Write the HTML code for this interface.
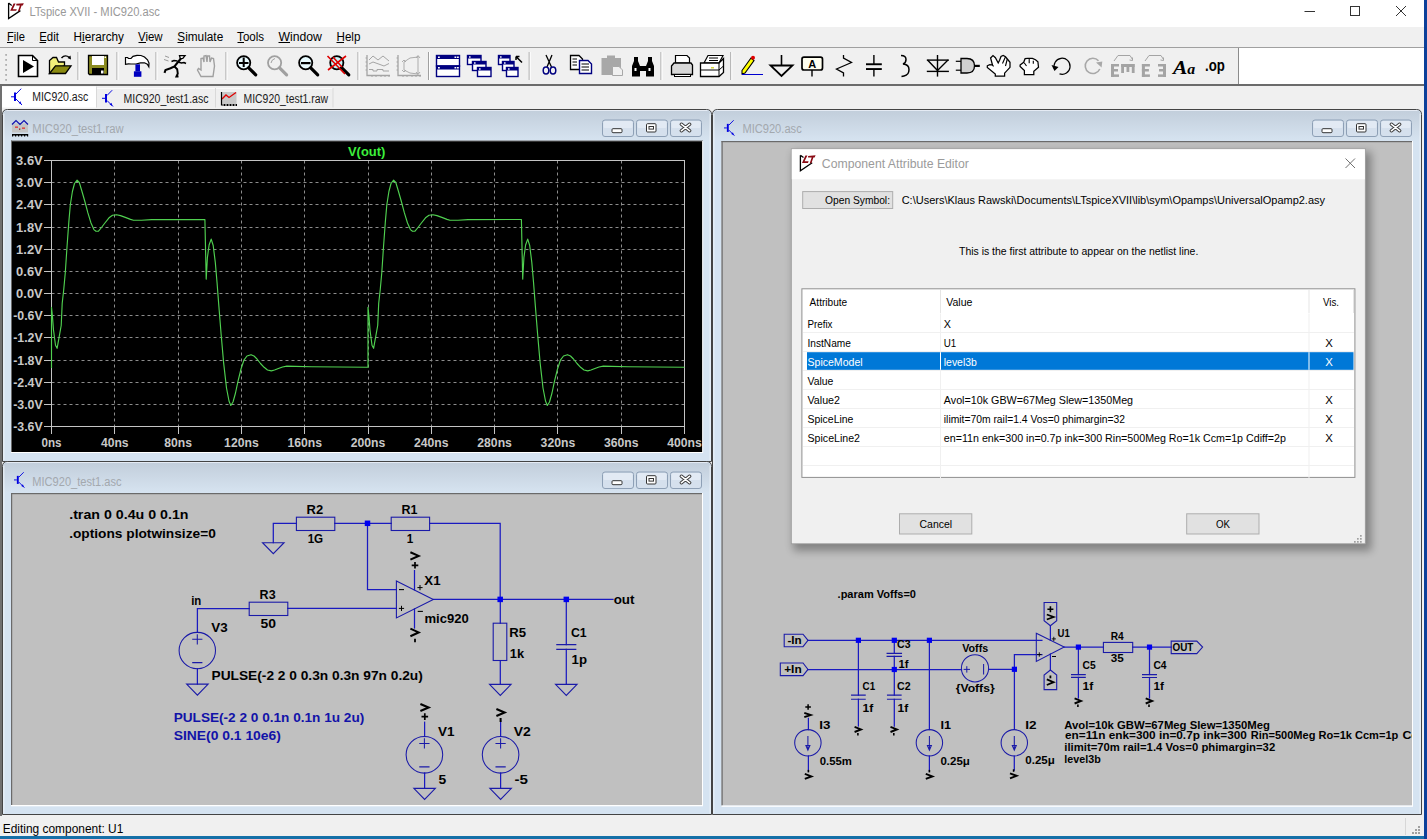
<!DOCTYPE html>
<html><head><meta charset="utf-8"><style>
*{margin:0;padding:0}
html,body{width:1427px;height:839px;overflow:hidden;background:#f0f0f0}
svg{display:block;font-family:"Liberation Sans",sans-serif}
</style></head><body>
<svg width="1427" height="839" viewBox="0 0 1427 839">
<rect x="0" y="0" width="1427" height="839" fill="#f0f0f0"/>
<rect x="0" y="0" width="1427" height="27" fill="#ffffff"/>
<g transform="translate(0.0,0.0)">
<path d="M8.6,3.1 L8.6,18.6 L20.4,10.6 M8.6,3.1 L11.7,5.4" stroke="#000" fill="none" stroke-width="1.3"/>
<path d="M13.6,3.4 L15.6,3.4 L12.8,9.2 L16.8,9.2 L16.2,10.8 L10.2,10.8 Z" stroke="none" fill="#8a0a14" stroke-width="1"/>
<path d="M16.3,3.8 L23.8,3.2 L22.8,5.5 L21.6,5.5 L19.6,11.2 L17.9,11.2 L19.9,5.5 L16.3,5.5 Z" stroke="none" fill="#8a0a14" stroke-width="1"/>
</g>
<text x="29.4" y="16" font-size="12" fill="#999" textLength="130.4" lengthAdjust="spacingAndGlyphs">LTspice XVII - MIC920.asc</text>
<line x1="1304.5" y1="11.5" x2="1315" y2="11.5" stroke="#333" stroke-width="1"/>
<rect x="1350.5" y="6.5" width="9" height="9" fill="none" stroke="#333" stroke-width="1"/>
<line x1="1396" y1="6" x2="1406" y2="16" stroke="#333" stroke-width="1"/>
<line x1="1406" y1="6" x2="1396" y2="16" stroke="#333" stroke-width="1"/>
<rect x="0" y="27" width="1424" height="20" fill="#f0f0f0"/>
<rect x="0" y="47" width="1424" height="1" fill="#a0a0a0"/>
<text x="7" y="41" font-size="12" fill="#000" textLength="18" lengthAdjust="spacingAndGlyphs">File</text>
<text x="39.2" y="41" font-size="12" fill="#000" textLength="19.7" lengthAdjust="spacingAndGlyphs">Edit</text>
<text x="73.6" y="41" font-size="12" fill="#000" textLength="50.4" lengthAdjust="spacingAndGlyphs">Hierarchy</text>
<text x="138" y="41" font-size="12" fill="#000" textLength="24.6" lengthAdjust="spacingAndGlyphs">View</text>
<text x="177.3" y="41" font-size="12" fill="#000" textLength="45.9" lengthAdjust="spacingAndGlyphs">Simulate</text>
<text x="237.1" y="41" font-size="12" fill="#000" textLength="27" lengthAdjust="spacingAndGlyphs">Tools</text>
<text x="278.4" y="41" font-size="12" fill="#000" textLength="43.5" lengthAdjust="spacingAndGlyphs">Window</text>
<text x="336.5" y="41" font-size="12" fill="#000" textLength="23.9" lengthAdjust="spacingAndGlyphs">Help</text>
<rect x="7" y="42" width="6" height="1" fill="#000"/>
<rect x="39.5" y="42" width="6.5" height="1" fill="#000"/>
<rect x="81.5" y="42" width="3.5" height="1" fill="#000"/>
<rect x="138.5" y="42" width="7.5" height="1" fill="#000"/>
<rect x="177.5" y="42" width="6.5" height="1" fill="#000"/>
<rect x="237.5" y="42" width="6.5" height="1" fill="#000"/>
<rect x="278.5" y="42" width="11.5" height="1" fill="#000"/>
<rect x="336.5" y="42" width="7.5" height="1" fill="#000"/>
<rect x="0" y="48" width="1238" height="36" fill="#f0f0f0"/>
<rect x="1238" y="48" width="189" height="36" fill="#ffffff"/>
<rect x="1238" y="48" width="1" height="36" fill="#8c8c8c"/>
<rect x="0" y="84" width="1424" height="2" fill="#6b6b6b"/>
<rect x="5.2" y="54" width="1.8" height="1.8" fill="#b0b0b0"/>
<rect x="5.2" y="59" width="1.8" height="1.8" fill="#b0b0b0"/>
<rect x="5.2" y="64" width="1.8" height="1.8" fill="#b0b0b0"/>
<rect x="5.2" y="69" width="1.8" height="1.8" fill="#b0b0b0"/>
<rect x="5.2" y="74" width="1.8" height="1.8" fill="#b0b0b0"/>
<rect x="5.2" y="79" width="1.8" height="1.8" fill="#b0b0b0"/>
<rect x="77.5" y="52" width="1" height="28" fill="#a0a0a0"/>
<rect x="78.5" y="52" width="1" height="28" fill="#ffffff"/>
<rect x="116.5" y="52" width="1" height="28" fill="#a0a0a0"/>
<rect x="117.5" y="52" width="1" height="28" fill="#ffffff"/>
<rect x="155.5" y="52" width="1" height="28" fill="#a0a0a0"/>
<rect x="156.5" y="52" width="1" height="28" fill="#ffffff"/>
<rect x="225.5" y="52" width="1" height="28" fill="#a0a0a0"/>
<rect x="226.5" y="52" width="1" height="28" fill="#ffffff"/>
<rect x="357.5" y="52" width="1" height="28" fill="#a0a0a0"/>
<rect x="358.5" y="52" width="1" height="28" fill="#ffffff"/>
<rect x="428" y="52" width="1" height="28" fill="#a0a0a0"/>
<rect x="429" y="52" width="1" height="28" fill="#ffffff"/>
<rect x="528.7" y="52" width="1" height="28" fill="#a0a0a0"/>
<rect x="529.7" y="52" width="1" height="28" fill="#ffffff"/>
<rect x="660.5" y="52" width="1" height="28" fill="#a0a0a0"/>
<rect x="661.5" y="52" width="1" height="28" fill="#ffffff"/>
<rect x="730.3" y="52" width="1" height="28" fill="#a0a0a0"/>
<rect x="731.3" y="52" width="1" height="28" fill="#ffffff"/>
<rect x="0" y="86" width="1424" height="23" fill="#f0f0f0"/>
<rect x="0" y="815" width="1424" height="1" fill="#ffffff"/>
<rect x="0" y="816" width="1424" height="20" fill="#f0f0f0"/>
<text x="2.8" y="833" font-size="12.6" fill="#000" textLength="120.5" lengthAdjust="spacingAndGlyphs">Editing component: U1</text>
<rect x="1405" y="818" width="1" height="17" fill="#d7d7d7"/>
<rect x="1418" y="826" width="2" height="2" fill="#a0a0a0"/>
<rect x="1415" y="829" width="2" height="2" fill="#a0a0a0"/>
<rect x="1418" y="829" width="2" height="2" fill="#a0a0a0"/>
<rect x="1412" y="832" width="2" height="2" fill="#a0a0a0"/>
<rect x="1415" y="832" width="2" height="2" fill="#a0a0a0"/>
<rect x="1418" y="832" width="2" height="2" fill="#a0a0a0"/>
<rect x="1424" y="0" width="3" height="839" fill="#0c409a"/>
<rect x="0" y="836" width="1424" height="3" fill="#1570a8"/>
<path d="M18.5,55.5 L32.5,55.5 L37.5,60.5 L37.5,76.5 L18.5,76.5 Z" stroke="#000" fill="#fff" stroke-width="1.6"/>
<path d="M32.5,55.5 L32.5,60.5 L37.5,60.5" stroke="#000" fill="none" stroke-width="1"/>
<path d="M23,60 L34,66.5 L23,73 Z" stroke="none" fill="#000" stroke-width="1"/>
<path d="M49.5,73.5 L49.5,60.5 L53,57.5 L56.5,57.5 L58.5,62 L64.5,62 L64.5,65.5 Z" stroke="#000" fill="#f2f07a" stroke-width="1.3"/>
<path d="M49.5,73.5 L55.5,65.8 L71,65.8 L65.5,73.5 Z" stroke="#000" fill="#8a8a10" stroke-width="1.3"/>
<path d="M61.5,58 Q65,54 69.5,57.5" stroke="#000" fill="none" stroke-width="1.4"/>
<path d="M67.5,58 L71,59.5 L70.5,55.5 Z" stroke="none" fill="#000" stroke-width="1"/>
<path d="M88.5,55.5 L107.5,55.5 L107.5,74.5 L89.5,74.5 L88.5,73.5 Z" stroke="#000" fill="#8c8c20" stroke-width="1.3"/>
<rect x="92" y="56" width="12" height="9" fill="#ffffff"/>
<rect x="92" y="68" width="12" height="7" fill="#000"/>
<rect x="101" y="70.5" width="2.5" height="3" fill="#ffffff"/>
<rect x="104.5" y="56.5" width="1.5" height="1.5" fill="#ffffff"/>
<path d="M125.5,57.5 L127.5,57.5 L128.5,58.5 L131,58.5 L133,56.3 L137,55.3 L141,55.5 L144.5,57 L147.5,59.8 L149,63 L148.8,66.8 L147.3,64.3 L144.5,62.8 L140.5,62.8 L136,64 L131,64 L128.5,63.8 L125.5,64.3 Z" stroke="#000" fill="#fff" stroke-width="1.2"/>
<rect x="135.4" y="64.3" width="4.6" height="7.2" fill="#0000c0"/>
<rect x="133.9" y="71.3" width="7.5" height="5.5" fill="#0000c0"/>
<path d="M179.5,55.6 L185,55.6 L182.8,58.3 L180.3,58.6 Z" stroke="#000" fill="#fff" stroke-width="1.3"/>
<path d="M181,58.5 L178,62 L174.5,66.5 L170.5,68.3 L165.5,70 L164.5,72.8" stroke="#000" fill="none" stroke-width="2.1"/>
<path d="M174.5,66.5 L177.2,69.3 L177.8,73.5 L176.4,76.5 L178.5,76.5" stroke="#000" fill="none" stroke-width="1.9"/>
<path d="M178,62 L181.5,63 L184,62.5 L186,63.5" stroke="#000" fill="none" stroke-width="1.6"/>
<path d="M177.5,61 L174,60.5 L171.5,61.5" stroke="#000" fill="none" stroke-width="1.6"/>
<path d="M165,56 L169,57.5 M164,59.5 L168.5,61" stroke="#909090" fill="none" stroke-width="0.9"/>
<path d="M201,76.5 L197.5,70 L198.5,68.5 L201,70 L201,58.5 L203,58 L204,62 L204,56 L206,55.5 L207,62 L207.5,56 L209.5,56 L210,62 L211.5,58 L213.5,58.5 L214.5,66 L213,76.5 Z" stroke="#a0a0a0" fill="#f0f0f0" stroke-width="1.4"/>
<circle cx="243.7" cy="62.8" r="6.6" fill="#e8fbff" stroke="#000" stroke-width="1.8"/>
<line x1="248.7" y1="67.8" x2="255.7" y2="74.8" stroke="#000" stroke-width="3.2" stroke-linecap="round"/>
<rect x="239" y="62" width="9.5" height="2" fill="#000"/>
<rect x="242.7" y="57.5" width="2" height="9.5" fill="#000"/>
<circle cx="274.6" cy="62.8" r="6.6" fill="#f0f0f0" stroke="#a0a0a0" stroke-width="1.8"/>
<line x1="279.6" y1="67.8" x2="286.6" y2="74.8" stroke="#a0a0a0" stroke-width="3.2" stroke-linecap="round"/>
<path d="M271,63 Q271.5,59.5 275,58.5" stroke="#a0a0a0" fill="none" stroke-width="1"/>
<circle cx="305.7" cy="62.8" r="6.6" fill="#e8fbff" stroke="#000" stroke-width="1.8"/>
<line x1="310.7" y1="67.8" x2="317.7" y2="74.8" stroke="#000" stroke-width="3.2" stroke-linecap="round"/>
<rect x="301" y="62" width="9.5" height="2.2" fill="#000"/>
<circle cx="336.8" cy="62.8" r="6.6" fill="#c8f4f8" stroke="#000" stroke-width="1.8"/>
<line x1="341.8" y1="67.8" x2="348.8" y2="74.8" stroke="#000" stroke-width="3.2" stroke-linecap="round"/>
<path d="M327.5,56 L345,74 M328,70 L346,56 M333,57 L342,67" stroke="#e00000" fill="none" stroke-width="1.6"/>
<path d="M367,55 L367,75.5 L390,75.5" stroke="#a4a4a4" fill="none" stroke-width="1.3"/>
<line x1="365.5" y1="58" x2="367" y2="58" stroke="#a4a4a4" stroke-width="1"/>
<line x1="365.5" y1="62" x2="367" y2="62" stroke="#a4a4a4" stroke-width="1"/>
<line x1="365.5" y1="66" x2="367" y2="66" stroke="#a4a4a4" stroke-width="1"/>
<line x1="365.5" y1="70" x2="367" y2="70" stroke="#a4a4a4" stroke-width="1"/>
<line x1="372" y1="75.5" x2="372" y2="77" stroke="#a4a4a4" stroke-width="1"/>
<line x1="376" y1="75.5" x2="376" y2="77" stroke="#a4a4a4" stroke-width="1"/>
<line x1="381" y1="75.5" x2="381" y2="77" stroke="#a4a4a4" stroke-width="1"/>
<line x1="385" y1="75.5" x2="385" y2="77" stroke="#a4a4a4" stroke-width="1"/>
<line x1="389" y1="75.5" x2="389" y2="77" stroke="#a4a4a4" stroke-width="1"/>
<path d="M369,60 L373,56 L378,60 L383,56 L389,61" stroke="#a4a4a4" fill="none" stroke-width="1"/>
<path d="M369,64 L373,62 L380,64.5 L384,66 L389,63.5" stroke="#a4a4a4" fill="none" stroke-width="1"/>
<path d="M369,69.5 L373,69.5 L373,71 L377,71 L377,69.5 L383,69.5 L383,71 L389,71" stroke="#a4a4a4" fill="none" stroke-width="1"/>
<path d="M398,55 L398,75.5 L421,75.5" stroke="#a4a4a4" fill="none" stroke-width="1.3"/>
<line x1="396.5" y1="58" x2="398" y2="58" stroke="#a4a4a4" stroke-width="1"/>
<line x1="396.5" y1="62" x2="398" y2="62" stroke="#a4a4a4" stroke-width="1"/>
<line x1="396.5" y1="66" x2="398" y2="66" stroke="#a4a4a4" stroke-width="1"/>
<line x1="396.5" y1="70" x2="398" y2="70" stroke="#a4a4a4" stroke-width="1"/>
<line x1="403" y1="75.5" x2="403" y2="77" stroke="#a4a4a4" stroke-width="1"/>
<line x1="407" y1="75.5" x2="407" y2="77" stroke="#a4a4a4" stroke-width="1"/>
<line x1="412" y1="75.5" x2="412" y2="77" stroke="#a4a4a4" stroke-width="1"/>
<line x1="416" y1="75.5" x2="416" y2="77" stroke="#a4a4a4" stroke-width="1"/>
<line x1="420" y1="75.5" x2="420" y2="77" stroke="#a4a4a4" stroke-width="1"/>
<path d="M418,56 L418,74 M416,58 L418,55.5 L420,58 M416,72 L418,74.5 L420,72 M418,57 L410,58 L404,62 L404,70 L410,73 L418,74 M402,62 L404,60 L406,62 M402,70 L404,72 L406,70" stroke="#a4a4a4" fill="none" stroke-width="0.9"/>
<rect x="436.5" y="55.5" width="23" height="10.5" fill="#fff" stroke="#000080" stroke-width="1.4"/>
<rect x="436.5" y="55.5" width="23" height="3.5" fill="#000080"/>
<rect x="438.0" y="56.5" width="1.8" height="1.5" fill="#fff"/>
<rect x="454.5" y="56.5" width="1.8" height="1.5" fill="#fff"/>
<rect x="457.0" y="56.5" width="1.8" height="1.5" fill="#fff"/>
<rect x="436.5" y="66" width="23" height="10.5" fill="#fff" stroke="#000080" stroke-width="1.4"/>
<rect x="436.5" y="66" width="23" height="3.5" fill="#000080"/>
<rect x="438.0" y="67" width="1.8" height="1.5" fill="#fff"/>
<rect x="454.5" y="67" width="1.8" height="1.5" fill="#fff"/>
<rect x="457.0" y="67" width="1.8" height="1.5" fill="#fff"/>
<rect x="467.5" y="55.5" width="13.5" height="9" fill="#fff" stroke="#000080" stroke-width="1.4"/>
<rect x="467.5" y="55.5" width="13.5" height="3" fill="#000080"/>
<rect x="469.0" y="56.3" width="1.6" height="1.4" fill="#fff"/>
<rect x="472.5" y="61.5" width="13.5" height="9" fill="#fff" stroke="#000080" stroke-width="1.4"/>
<rect x="472.5" y="61.5" width="13.5" height="3" fill="#000080"/>
<rect x="474.0" y="62.3" width="1.6" height="1.4" fill="#fff"/>
<rect x="477.5" y="67.5" width="13.5" height="9" fill="#fff" stroke="#000080" stroke-width="1.4"/>
<rect x="477.5" y="67.5" width="13.5" height="3" fill="#000080"/>
<rect x="479.0" y="68.3" width="1.6" height="1.4" fill="#fff"/>
<rect x="498.5" y="55.5" width="11.5" height="9" fill="#fff" stroke="#000080" stroke-width="1.4"/>
<rect x="498.5" y="55.5" width="11.5" height="3" fill="#000080"/>
<rect x="500.0" y="56.3" width="1.6" height="1.4" fill="#fff"/>
<rect x="502.5" y="61.5" width="11.5" height="9" fill="#fff" stroke="#000080" stroke-width="1.4"/>
<rect x="502.5" y="61.5" width="11.5" height="3" fill="#000080"/>
<rect x="504.0" y="62.3" width="1.6" height="1.4" fill="#fff"/>
<rect x="506.5" y="67.5" width="11.5" height="9" fill="#fff" stroke="#000080" stroke-width="1.4"/>
<rect x="506.5" y="67.5" width="11.5" height="3" fill="#000080"/>
<rect x="508.0" y="68.3" width="1.6" height="1.4" fill="#fff"/>
<path d="M516,56.5 L522,62.5 M516,56.5 L516,60 M516,56.5 L519.5,56.5" stroke="#000" fill="none" stroke-width="1.5"/>
<path d="M546,55 L551.5,67 M552,55 L547,67" stroke="#000" fill="none" stroke-width="1.3"/>
<ellipse cx="546" cy="70.5" rx="2.8" ry="3.5" fill="none" stroke="#000080" stroke-width="1.5"/>
<ellipse cx="553" cy="70.5" rx="2.8" ry="3.5" fill="none" stroke="#000080" stroke-width="1.5"/>
<path d="M570.5,55.5 L579,55.5 L582.5,59 L582.5,69.5 L570.5,69.5 Z" stroke="#000" fill="#fff" stroke-width="1.3"/>
<line x1="572.5" y1="59" x2="577" y2="59" stroke="#000" stroke-width="1"/>
<line x1="572.5" y1="62" x2="577" y2="62" stroke="#000" stroke-width="1"/>
<line x1="572.5" y1="65" x2="577" y2="65" stroke="#000" stroke-width="1"/>
<path d="M579.5,60.5 L588,60.5 L591.5,64 L591.5,73.5 L579.5,73.5 Z" stroke="#000080" fill="#fff" stroke-width="1.4"/>
<line x1="581.5" y1="64" x2="589" y2="64" stroke="#000" stroke-width="1"/>
<line x1="581.5" y1="67" x2="589" y2="67" stroke="#000" stroke-width="1"/>
<line x1="581.5" y1="70" x2="589" y2="70" stroke="#000" stroke-width="1"/>
<path d="M601.5,58 L621,58 L621,71 L612,71 L612,75 L601.5,75 Z" stroke="none" fill="#a8a8a8" stroke-width="1"/>
<rect x="607" y="55.5" width="8" height="3" fill="#a8a8a8"/>
<path d="M612.5,66.5 L619,66.5 L622.5,70 L622.5,75.5 L612.5,75.5 Z" stroke="#a8a8a8" fill="#f0f0f0" stroke-width="1"/>
<path d="M632,76.5 L632,66 L634,61 L634,57 L638,57 L638,61 L640,66 L646,66 L648,61 L648,57 L652,57 L652,61 L654,66 L654,76.5 L646,76.5 L646,71 L640,71 L640,76.5 Z" stroke="none" fill="#000" stroke-width="1"/>
<rect x="634.5" y="68" width="2" height="3" fill="#fff"/>
<rect x="648.5" y="68" width="2" height="3" fill="#fff"/>
<path d="M675.5,55.5 L687,55.5 L689.5,58 L689.5,63 L675.5,63 Z" stroke="#000" fill="#fff" stroke-width="1.2"/>
<path d="M671.5,66 L674,63 L691,63 L692.5,65 L692.5,74.5 L671.5,74.5 Z" stroke="#000" fill="#d8d8d8" stroke-width="1.3"/>
<rect x="674.5" y="74.5" width="16" height="2" fill="#fff" stroke="#000" stroke-width="1"/>
<path d="M704,63 L708,55.5 L723,55.5 L719,63 Z" stroke="#000" fill="#fff" stroke-width="1.2"/>
<line x1="709" y1="58" x2="718" y2="58" stroke="#000" stroke-width="1"/>
<line x1="709" y1="60.5" x2="718" y2="60.5" stroke="#000" stroke-width="1"/>
<path d="M700.5,63 L719,63 L723.5,58.5 L723.5,72.5 L719,76.5 L700.5,76.5 Z" stroke="#000" fill="#fff" stroke-width="1.3"/>
<line x1="700.5" y1="70" x2="719" y2="70" stroke="#000" stroke-width="1"/>
<line x1="719" y1="63" x2="719" y2="76.5" stroke="#000" stroke-width="1"/>
<line x1="719" y1="70" x2="723.5" y2="66" stroke="#000" stroke-width="1"/>
<rect x="711" y="67" width="3" height="1.5" fill="#d8d840"/>
<path d="M742,70.5 L751,58 L754,60.5 L745,73 L742,74 Z" stroke="#000" fill="#ffff00" stroke-width="1.1"/>
<circle cx="753" cy="57.8" r="2" fill="#e00000"/>
<line x1="742" y1="74.5" x2="763" y2="74.5" stroke="#0000d0" stroke-width="1"/>
<line x1="781.5" y1="55" x2="781.5" y2="65.5" stroke="#000" stroke-width="1.6"/>
<path d="M770.5,65.5 L792.5,65.5 L781.5,76 Z" stroke="#000" fill="none" stroke-width="1.8"/>
<rect x="802" y="57.2" width="20.5" height="12.8" fill="#fffff0" stroke="#000" stroke-width="1.7" rx="2"/>
<text x="812.2" y="68.2" font-size="11" fill="#000" font-weight="bold" text-anchor="middle">A</text>
<line x1="812" y1="70" x2="812" y2="76.5" stroke="#000" stroke-width="1.4"/>
<path d="M843.5,55 L843.5,58 L851.5,62.5 L836.5,69 L843.5,73 L843.5,76.5" stroke="#000" fill="none" stroke-width="1.3"/>
<line x1="873.9" y1="55" x2="873.9" y2="64" stroke="#000" stroke-width="1.4"/>
<line x1="873.9" y1="69" x2="873.9" y2="76.5" stroke="#000" stroke-width="1.4"/>
<rect x="866" y="63.3" width="15.8" height="1.9" fill="#000"/>
<rect x="866" y="68.1" width="15.8" height="1.9" fill="#000"/>
<path d="M901,55.5 Q906,55.5 906,59.5 Q906,63 903,64 Q909,64.5 909,69.5 Q909,75 904,76 L901.5,76.5" stroke="#000" fill="none" stroke-width="1.5"/>
<line x1="926.8" y1="60.1" x2="948.9" y2="60.1" stroke="#000" stroke-width="1.4"/>
<line x1="926.8" y1="71.4" x2="948.9" y2="71.4" stroke="#000" stroke-width="1.4"/>
<path d="M927.5,60.1 L937.5,70.5 L948,60.1" stroke="#000" fill="none" stroke-width="1.4"/>
<line x1="937.5" y1="55" x2="937.5" y2="76.6" stroke="#000" stroke-width="1.4"/>
<path d="M961,58.5 L967,58.5 Q974.5,58.5 974.5,65.8 Q974.5,73 967,73 L961,73 Z" stroke="#000" fill="#d0d0d0" stroke-width="1.3"/>
<line x1="955.8" y1="61.3" x2="961" y2="61.3" stroke="#000" stroke-width="1.2"/>
<line x1="955.8" y1="70.2" x2="961" y2="70.2" stroke="#000" stroke-width="1.2"/>
<rect x="974.5" y="64.8" width="5.3" height="2.2" fill="#000"/>
<path d="M987.3,65.8 L989.8,64.6 L992.5,65 L990.6,58 L993,55.6 L995.4,57.7 L998.2,63 L999.6,60.3 L1001,56.5 L1003.2,55.5 L1005.5,56.8 L1007.3,59 L1010,62.3 L1010,67.3 L1004.6,73.2 L1004.6,76.2 L995.3,76.2 L995.3,74.1 L987.3,67.5 Z" stroke="#000" fill="#fff" stroke-width="1.25"/>
<path d="M1005.5,56.8 L1002.5,63.5 M1007.3,59 L1005.5,66 M992.5,65 L993.5,66.5" stroke="#000" fill="none" stroke-width="1.1"/>
<path d="M1020.1,65 L1023.7,62.3 L1025.1,58.7 L1027.8,58.4 L1032.4,58.4 L1035.5,59.8 L1037.9,61.8 L1038.5,67.3 L1033.8,71.4 L1033.8,74.6 L1024.4,74.6 L1024.4,70.5 L1020.1,66.4 Z" stroke="#000" fill="#fff" stroke-width="1.25"/>
<path d="M1029.2,59 L1029.2,63.2 M1033.3,60.8 L1033.3,63.7 M1024.2,62.8 L1026.5,66" stroke="#000" fill="none" stroke-width="1.1"/>
<path d="M1054,66.5 A8,8 0 1 1 1057,72.5" stroke="#000" fill="none" stroke-width="1.2" transform="rotate(-20 1062 66)"/>
<path d="M1051.5,65 L1054.5,71 L1058.5,67 Z" stroke="none" fill="#000" stroke-width="1"/>
<path d="M1098.5,60.8 A7.6,7.6 0 1 0 1099.8,69" stroke="#a8a8a8" fill="none" stroke-width="1.6"/>
<path d="M1096,62.5 L1102.3,61.5 L1101.6,67.5 Z" stroke="none" fill="#a8a8a8" stroke-width="1"/>
<rect x="1111" y="64" width="3" height="12.9" fill="#a4a4a4"/>
<rect x="1111" y="64" width="8" height="2.5" fill="#a4a4a4"/>
<rect x="1111" y="69" width="7" height="2.5" fill="#a4a4a4"/>
<rect x="1111" y="74.4" width="8" height="2.5" fill="#a4a4a4"/>
<rect x="1121.2" y="64" width="13.4" height="3" fill="#a4a4a4"/>
<rect x="1121.2" y="64" width="2.8" height="9" fill="#a4a4a4"/>
<rect x="1126.5" y="64" width="2.8" height="8" fill="#a4a4a4"/>
<rect x="1131.8" y="64" width="2.8" height="9" fill="#a4a4a4"/>
<path d="M1114,61 L1118,55.5 L1130,55.5 L1132.5,59.5 M1129.5,60 L1132.5,60.5 L1132.5,57.5" stroke="#a4a4a4" fill="none" stroke-width="1"/>
<rect x="1141.9" y="64" width="3" height="12.9" fill="#a4a4a4"/>
<rect x="1141.9" y="64" width="8" height="2.5" fill="#a4a4a4"/>
<rect x="1141.9" y="69" width="7" height="2.5" fill="#a4a4a4"/>
<rect x="1141.9" y="74.4" width="8" height="2.5" fill="#a4a4a4"/>
<rect x="1163" y="64" width="3" height="12.9" fill="#a4a4a4"/>
<rect x="1158" y="64" width="8" height="2.5" fill="#a4a4a4"/>
<rect x="1159" y="69" width="7" height="2.5" fill="#a4a4a4"/>
<rect x="1158" y="74.4" width="8" height="2.5" fill="#a4a4a4"/>
<path d="M1145,61 L1149,55.5 L1161,55.5 L1163.5,59.5 M1160.5,60 L1163.5,60.5 L1163.5,57.5" stroke="#a4a4a4" fill="none" stroke-width="1"/>
<text x="1173" y="74.2" font-family="Liberation Serif,serif" font-size="19" font-weight="bold" font-style="italic" fill="#000" textLength="22.3" lengthAdjust="spacingAndGlyphs">A<tspan font-size="14">a</tspan></text>
<text x="1205" y="70.6" font-size="16" fill="#000" font-weight="bold" textLength="19.8" lengthAdjust="spacingAndGlyphs">.op</text>
<rect x="0" y="86" width="1424" height="23" fill="#f0f0f0"/>
<rect x="2" y="86.5" width="94" height="21" fill="#ffffff"/>
<rect x="96" y="86.5" width="1" height="21" fill="#d9d9d9"/>
<rect x="97" y="88" width="118" height="19.5" fill="#efefef"/>
<rect x="97" y="88" width="118" height="1" fill="#fafafa"/>
<rect x="215" y="88" width="1" height="19.5" fill="#d9d9d9"/>
<rect x="216" y="88" width="117" height="19.5" fill="#efefef"/>
<rect x="216" y="88" width="117" height="1" fill="#fafafa"/>
<rect x="332.5" y="88" width="1" height="19.5" fill="#d9d9d9"/>
<g transform="translate(11,89.5) scale(1.0)">
<rect x="3" y="3" width="2" height="8.5" fill="#0000e0"/>
<line x1="0" y1="7.3" x2="3" y2="7.3" stroke="#0000e0" stroke-width="1.0"/>
<line x1="5" y1="4.5" x2="10.2" y2="-0.8" stroke="#0000e0" stroke-width="0.95"/>
<line x1="5" y1="9.5" x2="11" y2="15.5" stroke="#0000e0" stroke-width="0.95"/>
<path d="M7.6,13.6 L10.6,15 L9.4,11.8 Z" stroke="none" fill="#0000e0" stroke-width="1"/>
</g>
<text x="32.2" y="101" font-size="12" fill="#1a1a1a" textLength="56" lengthAdjust="spacingAndGlyphs">MIC920.asc</text>
<g transform="translate(102,91) scale(1.0)">
<rect x="3" y="3" width="2" height="8.5" fill="#0000e0"/>
<line x1="0" y1="7.3" x2="3" y2="7.3" stroke="#0000e0" stroke-width="1.0"/>
<line x1="5" y1="4.5" x2="10.2" y2="-0.8" stroke="#0000e0" stroke-width="0.95"/>
<line x1="5" y1="9.5" x2="11" y2="15.5" stroke="#0000e0" stroke-width="0.95"/>
<path d="M7.6,13.6 L10.6,15 L9.4,11.8 Z" stroke="none" fill="#0000e0" stroke-width="1"/>
</g>
<text x="123.5" y="103.2" font-size="12" fill="#1a1a1a" textLength="85" lengthAdjust="spacingAndGlyphs">MIC920_test1.asc</text>
<rect x="221.5" y="92" width="15" height="12" fill="#c8c8c8"/>
<path d="M222,99 L226,95 L229,97.5 L236,92.5" stroke="#e00000" fill="none" stroke-width="1.3"/>
<path d="M221.5,92 L221.5,105 L237,105" stroke="#000" fill="none" stroke-width="1.2"/>
<rect x="224" y="104" width="1" height="2" fill="#000"/>
<rect x="227" y="104" width="1" height="2" fill="#000"/>
<rect x="230" y="104" width="1" height="2" fill="#000"/>
<rect x="233" y="104" width="1" height="2" fill="#000"/>
<rect x="236" y="104" width="1" height="2" fill="#000"/>
<text x="243.5" y="103.2" font-size="12" fill="#1a1a1a" textLength="84.5" lengthAdjust="spacingAndGlyphs">MIC920_test1.raw</text>
<rect x="0" y="109" width="1424" height="707" fill="#f0f0f0"/>
<rect x="0" y="86" width="2" height="730" fill="#707070"/>
<defs><linearGradient id="tg2109" x1="0" y1="0" x2="0" y2="1"><stop offset="0" stop-color="#c2cedb"/><stop offset="1" stop-color="#d6e3f0"/></linearGradient></defs>
<path d="M2.5,461.5 L2.5,114.5 Q2.5,109.5 7.5,109.5 L706.5,109.5 Q711.5,109.5 711.5,114.5 L711.5,461.5 Z" fill="#d5e3f1" stroke="#444444" stroke-width="1"/>
<path d="M3.5,140.5 L3.5,114.5 Q3.5,110.5 7.5,110.5 L706.5,110.5 Q710.5,110.5 710.5,114.5 L710.5,140.5 Z" fill="url(#tg2109)"/>
<rect x="3.5" y="113.5" width="0.8" height="347.0" fill="#f4f8fc"/>
<rect x="709.7" y="113.5" width="0.8" height="347.0" fill="#f4f8fc"/>
<rect x="6.5" y="110.1" width="701.0" height="0.9" fill="#e8eef5"/>
<rect x="602.5" y="120.0" width="31" height="16.5" rx="2.5" fill="#d5e0ed" stroke="#8ea0b6" stroke-width="1"/>
<rect x="603.5" y="121.0" width="29" height="7" rx="1.5" fill="#e2eaf4"/>
<rect x="636.5" y="120.0" width="31" height="16.5" rx="2.5" fill="#d5e0ed" stroke="#8ea0b6" stroke-width="1"/>
<rect x="637.5" y="121.0" width="29" height="7" rx="1.5" fill="#e2eaf4"/>
<rect x="670.5" y="120.0" width="31" height="16.5" rx="2.5" fill="#d5e0ed" stroke="#8ea0b6" stroke-width="1"/>
<rect x="671.5" y="121.0" width="29" height="7" rx="1.5" fill="#e2eaf4"/>
<rect x="612" y="128.7" width="10" height="4" rx="1" fill="#fff" stroke="#333" stroke-width="1"/>
<rect x="646.5" y="123.7" width="9.5" height="8.3" rx="1" fill="#fff" stroke="#333" stroke-width="1"/>
<rect x="649" y="126.5" width="4.5" height="2.6" fill="none" stroke="#333" stroke-width="1"/>
<path d="M681.3,124.2 L689.7,130.8 M689.7,124.2 L681.3,130.8" stroke="#3a3a3a" stroke-width="3.4" stroke-linecap="round"/>
<path d="M681.3,124.2 L689.7,130.8 M689.7,124.2 L681.3,130.8" stroke="#fff" stroke-width="1.5" stroke-linecap="round"/>
<rect x="12" y="123.5" width="16" height="9" fill="#c4c4c4"/>
<path d="M12,124.5 L16,120.5 L20,124.5 L24,120.5 L28,124.5" stroke="#1010b0" fill="none" stroke-width="1.2"/>
<rect x="15" y="126.5" width="3" height="1.3" fill="#e03030"/>
<rect x="22" y="127.5" width="3" height="1.3" fill="#e03030"/>
<rect x="19" y="128.5" width="1.3" height="1.3" fill="#802020"/>
<rect x="12" y="134.0" width="16" height="1.5" fill="#000"/>
<rect x="12" y="134.0" width="1.2" height="2.5" fill="#000"/>
<rect x="15" y="134.0" width="1.2" height="2.5" fill="#000"/>
<rect x="18" y="134.0" width="1.2" height="2.5" fill="#000"/>
<rect x="21" y="134.0" width="1.2" height="2.5" fill="#000"/>
<rect x="24" y="134.0" width="1.2" height="2.5" fill="#000"/>
<rect x="27" y="134.0" width="1.2" height="2.5" fill="#000"/>
<text x="32.3" y="132.7" font-size="12" fill="#a3a8ae" textLength="91.3" lengthAdjust="spacingAndGlyphs">MIC920_test1.raw</text>
<rect x="11.5" y="141" width="691" height="311" fill="#000"/>
<rect x="11" y="140.5" width="692" height="1" fill="#6a6a6a"/>
<rect x="11" y="140.5" width="1" height="312" fill="#6a6a6a"/>
<rect x="702.2" y="141" width="1" height="312" fill="#ffffff"/>
<rect x="11" y="452" width="692" height="1" fill="#ffffff"/>
<defs><linearGradient id="tg2461" x1="0" y1="0" x2="0" y2="1"><stop offset="0" stop-color="#c2cedb"/><stop offset="1" stop-color="#d6e3f0"/></linearGradient></defs>
<path d="M2.5,814.5 L2.5,466.5 Q2.5,461.5 7.5,461.5 L706.5,461.5 Q711.5,461.5 711.5,466.5 L711.5,814.5 Z" fill="#d5e3f1" stroke="#444444" stroke-width="1"/>
<path d="M3.5,492.5 L3.5,466.5 Q3.5,462.5 7.5,462.5 L706.5,462.5 Q710.5,462.5 710.5,466.5 L710.5,492.5 Z" fill="url(#tg2461)"/>
<rect x="3.5" y="465.5" width="0.8" height="348.0" fill="#f4f8fc"/>
<rect x="709.7" y="465.5" width="0.8" height="348.0" fill="#f4f8fc"/>
<rect x="6.5" y="462.1" width="701.0" height="0.9" fill="#e8eef5"/>
<rect x="602.5" y="472.0" width="31" height="16.5" rx="2.5" fill="#d5e0ed" stroke="#8ea0b6" stroke-width="1"/>
<rect x="603.5" y="473.0" width="29" height="7" rx="1.5" fill="#e2eaf4"/>
<rect x="636.5" y="472.0" width="31" height="16.5" rx="2.5" fill="#d5e0ed" stroke="#8ea0b6" stroke-width="1"/>
<rect x="637.5" y="473.0" width="29" height="7" rx="1.5" fill="#e2eaf4"/>
<rect x="670.5" y="472.0" width="31" height="16.5" rx="2.5" fill="#d5e0ed" stroke="#8ea0b6" stroke-width="1"/>
<rect x="671.5" y="473.0" width="29" height="7" rx="1.5" fill="#e2eaf4"/>
<rect x="612" y="480.7" width="10" height="4" rx="1" fill="#fff" stroke="#333" stroke-width="1"/>
<rect x="646.5" y="475.7" width="9.5" height="8.3" rx="1" fill="#fff" stroke="#333" stroke-width="1"/>
<rect x="649" y="478.5" width="4.5" height="2.6" fill="none" stroke="#333" stroke-width="1"/>
<path d="M681.3,476.2 L689.7,482.8 M689.7,476.2 L681.3,482.8" stroke="#3a3a3a" stroke-width="3.4" stroke-linecap="round"/>
<path d="M681.3,476.2 L689.7,482.8 M689.7,476.2 L681.3,482.8" stroke="#fff" stroke-width="1.5" stroke-linecap="round"/>
<g transform="translate(14,473) scale(0.95)">
<rect x="3" y="3" width="2" height="8.5" fill="#0000e0"/>
<line x1="0" y1="7.3" x2="3" y2="7.3" stroke="#0000e0" stroke-width="1.0"/>
<line x1="5" y1="4.5" x2="10.2" y2="-0.8" stroke="#0000e0" stroke-width="0.95"/>
<line x1="5" y1="9.5" x2="11" y2="15.5" stroke="#0000e0" stroke-width="0.95"/>
<path d="M7.6,13.6 L10.6,15 L9.4,11.8 Z" stroke="none" fill="#0000e0" stroke-width="1"/>
</g>
<text x="32.3" y="486" font-size="12" fill="#a3a8ae" textLength="89.3" lengthAdjust="spacingAndGlyphs">MIC920_test1.asc</text>
<rect x="11" y="493" width="691" height="312" fill="#c0c0c0"/>
<rect x="11" y="493" width="691" height="1.2" fill="#6a6a6a"/>
<rect x="11" y="493" width="1.2" height="312" fill="#6a6a6a"/>
<rect x="702" y="493" width="1" height="313" fill="#ffffff"/>
<rect x="11" y="805" width="692" height="1.3" fill="#ffffff"/>
<defs><linearGradient id="tg712109" x1="0" y1="0" x2="0" y2="1"><stop offset="0" stop-color="#c2cedb"/><stop offset="1" stop-color="#d6e3f0"/></linearGradient></defs>
<path d="M712.5,814.5 L712.5,114.5 Q712.5,109.5 717.5,109.5 L1416.5,109.5 Q1421.5,109.5 1421.5,114.5 L1421.5,814.5 Z" fill="#d5e3f1" stroke="#444444" stroke-width="1"/>
<path d="M713.5,140.5 L713.5,114.5 Q713.5,110.5 717.5,110.5 L1416.5,110.5 Q1420.5,110.5 1420.5,114.5 L1420.5,140.5 Z" fill="url(#tg712109)"/>
<rect x="713.5" y="113.5" width="0.8" height="700.0" fill="#f4f8fc"/>
<rect x="1419.7" y="113.5" width="0.8" height="700.0" fill="#f4f8fc"/>
<rect x="716.5" y="110.1" width="701.0" height="0.9" fill="#e8eef5"/>
<rect x="1312.5" y="120.0" width="31" height="16.5" rx="2.5" fill="#d5e0ed" stroke="#8ea0b6" stroke-width="1"/>
<rect x="1313.5" y="121.0" width="29" height="7" rx="1.5" fill="#e2eaf4"/>
<rect x="1346.5" y="120.0" width="31" height="16.5" rx="2.5" fill="#d5e0ed" stroke="#8ea0b6" stroke-width="1"/>
<rect x="1347.5" y="121.0" width="29" height="7" rx="1.5" fill="#e2eaf4"/>
<rect x="1380.5" y="120.0" width="31" height="16.5" rx="2.5" fill="#d5e0ed" stroke="#8ea0b6" stroke-width="1"/>
<rect x="1381.5" y="121.0" width="29" height="7" rx="1.5" fill="#e2eaf4"/>
<rect x="1322" y="128.7" width="10" height="4" rx="1" fill="#fff" stroke="#333" stroke-width="1"/>
<rect x="1356.5" y="123.7" width="9.5" height="8.3" rx="1" fill="#fff" stroke="#333" stroke-width="1"/>
<rect x="1359" y="126.5" width="4.5" height="2.6" fill="none" stroke="#333" stroke-width="1"/>
<path d="M1391.3,124.2 L1399.7,130.8 M1399.7,124.2 L1391.3,130.8" stroke="#3a3a3a" stroke-width="3.4" stroke-linecap="round"/>
<path d="M1391.3,124.2 L1399.7,130.8 M1399.7,124.2 L1391.3,130.8" stroke="#fff" stroke-width="1.5" stroke-linecap="round"/>
<g transform="translate(724,121) scale(0.95)">
<rect x="3" y="3" width="2" height="8.5" fill="#0000e0"/>
<line x1="0" y1="7.3" x2="3" y2="7.3" stroke="#0000e0" stroke-width="1.0"/>
<line x1="5" y1="4.5" x2="10.2" y2="-0.8" stroke="#0000e0" stroke-width="0.95"/>
<line x1="5" y1="9.5" x2="11" y2="15.5" stroke="#0000e0" stroke-width="0.95"/>
<path d="M7.6,13.6 L10.6,15 L9.4,11.8 Z" stroke="none" fill="#0000e0" stroke-width="1"/>
</g>
<text x="742.4" y="132.7" font-size="12" fill="#a3a8ae" textLength="59.3" lengthAdjust="spacingAndGlyphs">MIC920.asc</text>
<rect x="721.5" y="141" width="691" height="664.5" fill="#c0c0c0"/>
<rect x="721.5" y="141" width="691" height="1.2" fill="#6a6a6a"/>
<rect x="721.5" y="141" width="1.2" height="664.5" fill="#6a6a6a"/>
<rect x="1412" y="141" width="1" height="665" fill="#ffffff"/>
<rect x="721.5" y="805.5" width="691.5" height="1.3" fill="#ffffff"/>
<path d="M114.5,160.5 L114.5,426.5004 M178.5,160.5 L178.5,426.5004 M241.5,160.5 L241.5,426.5004 M304.5,160.5 L304.5,426.5004 M368.5,160.5 L368.5,426.5004 M431.5,160.5 L431.5,426.5004 M494.5,160.5 L494.5,426.5004 M557.5,160.5 L557.5,426.5004 M621.5,160.5 L621.5,426.5004 " stroke="#8c8c8c" fill="none" stroke-width="1" stroke-dasharray="3,3"/>
<path d="M51.5,182.5 L684.5,182.5 M51.5,204.5 L684.5,204.5 M51.5,227.5 L684.5,227.5 M51.5,249.5 L684.5,249.5 M51.5,271.5 L684.5,271.5 M51.5,293.5 L684.5,293.5 M51.5,315.5 L684.5,315.5 M51.5,337.5 L684.5,337.5 M51.5,360.5 L684.5,360.5 M51.5,382.5 L684.5,382.5 M51.5,404.5 L684.5,404.5 " stroke="#8c8c8c" fill="none" stroke-width="1" stroke-dasharray="3,3"/>
<rect x="51.5" y="160.5" width="633.0" height="266.0" fill="none" stroke="#c4c4c4" stroke-width="1"/>
<path d="M44,160.5 L51.5,160.5 M44,182.5 L51.5,182.5 M44,204.5 L51.5,204.5 M44,227.5 L51.5,227.5 M44,249.5 L51.5,249.5 M44,271.5 L51.5,271.5 M44,293.5 L51.5,293.5 M44,315.5 L51.5,315.5 M44,337.5 L51.5,337.5 M44,360.5 L51.5,360.5 M44,382.5 L51.5,382.5 M44,404.5 L51.5,404.5 M44,426.5 L51.5,426.5 M51.5,426.5004 L51.5,434 M114.5,426.5004 L114.5,434 M178.5,426.5004 L178.5,434 M241.5,426.5004 L241.5,434 M304.5,426.5004 L304.5,434 M368.5,426.5004 L368.5,434 M431.5,426.5004 L431.5,434 M494.5,426.5004 L494.5,434 M557.5,426.5004 L557.5,434 M621.5,426.5004 L621.5,434 M684.5,426.5004 L684.5,434 " stroke="#c4c4c4" fill="none" stroke-width="1"/>
<text x="42.7" y="165.0" font-size="12.5" fill="#c8c8c8" font-weight="bold" text-anchor="end" textLength="26.6" lengthAdjust="spacingAndGlyphs">3.6V</text>
<text x="42.7" y="187.2" font-size="12.5" fill="#c8c8c8" font-weight="bold" text-anchor="end" textLength="26.6" lengthAdjust="spacingAndGlyphs">3.0V</text>
<text x="42.7" y="209.3" font-size="12.5" fill="#c8c8c8" font-weight="bold" text-anchor="end" textLength="26.6" lengthAdjust="spacingAndGlyphs">2.4V</text>
<text x="42.7" y="231.5" font-size="12.5" fill="#c8c8c8" font-weight="bold" text-anchor="end" textLength="26.6" lengthAdjust="spacingAndGlyphs">1.8V</text>
<text x="42.7" y="253.7" font-size="12.5" fill="#c8c8c8" font-weight="bold" text-anchor="end" textLength="26.6" lengthAdjust="spacingAndGlyphs">1.2V</text>
<text x="42.7" y="275.8" font-size="12.5" fill="#c8c8c8" font-weight="bold" text-anchor="end" textLength="26.6" lengthAdjust="spacingAndGlyphs">0.6V</text>
<text x="42.7" y="298.0" font-size="12.5" fill="#c8c8c8" font-weight="bold" text-anchor="end" textLength="26.6" lengthAdjust="spacingAndGlyphs">0.0V</text>
<text x="42.7" y="320.2" font-size="12.5" fill="#c8c8c8" font-weight="bold" text-anchor="end" textLength="29.5" lengthAdjust="spacingAndGlyphs">-0.6V</text>
<text x="42.7" y="342.3" font-size="12.5" fill="#c8c8c8" font-weight="bold" text-anchor="end" textLength="29.5" lengthAdjust="spacingAndGlyphs">-1.2V</text>
<text x="42.7" y="364.5" font-size="12.5" fill="#c8c8c8" font-weight="bold" text-anchor="end" textLength="29.5" lengthAdjust="spacingAndGlyphs">-1.8V</text>
<text x="42.7" y="386.7" font-size="12.5" fill="#c8c8c8" font-weight="bold" text-anchor="end" textLength="29.5" lengthAdjust="spacingAndGlyphs">-2.4V</text>
<text x="42.7" y="408.8" font-size="12.5" fill="#c8c8c8" font-weight="bold" text-anchor="end" textLength="29.5" lengthAdjust="spacingAndGlyphs">-3.0V</text>
<text x="42.7" y="431.0" font-size="12.5" fill="#c8c8c8" font-weight="bold" text-anchor="end" textLength="29.5" lengthAdjust="spacingAndGlyphs">-3.6V</text>
<text x="51.5" y="446.5" font-size="12.5" fill="#c8c8c8" font-weight="bold" text-anchor="middle" textLength="20" lengthAdjust="spacingAndGlyphs">0ns</text>
<text x="114.8" y="446.5" font-size="12.5" fill="#c8c8c8" font-weight="bold" text-anchor="middle" textLength="27.7" lengthAdjust="spacingAndGlyphs">40ns</text>
<text x="178.1" y="446.5" font-size="12.5" fill="#c8c8c8" font-weight="bold" text-anchor="middle" textLength="27.7" lengthAdjust="spacingAndGlyphs">80ns</text>
<text x="241.4" y="446.5" font-size="12.5" fill="#c8c8c8" font-weight="bold" text-anchor="middle" textLength="34.6" lengthAdjust="spacingAndGlyphs">120ns</text>
<text x="304.7" y="446.5" font-size="12.5" fill="#c8c8c8" font-weight="bold" text-anchor="middle" textLength="34.6" lengthAdjust="spacingAndGlyphs">160ns</text>
<text x="368.0" y="446.5" font-size="12.5" fill="#c8c8c8" font-weight="bold" text-anchor="middle" textLength="34.6" lengthAdjust="spacingAndGlyphs">200ns</text>
<text x="431.3" y="446.5" font-size="12.5" fill="#c8c8c8" font-weight="bold" text-anchor="middle" textLength="34.6" lengthAdjust="spacingAndGlyphs">240ns</text>
<text x="494.6" y="446.5" font-size="12.5" fill="#c8c8c8" font-weight="bold" text-anchor="middle" textLength="34.6" lengthAdjust="spacingAndGlyphs">280ns</text>
<text x="557.9" y="446.5" font-size="12.5" fill="#c8c8c8" font-weight="bold" text-anchor="middle" textLength="34.6" lengthAdjust="spacingAndGlyphs">320ns</text>
<text x="621.2" y="446.5" font-size="12.5" fill="#c8c8c8" font-weight="bold" text-anchor="middle" textLength="34.6" lengthAdjust="spacingAndGlyphs">360ns</text>
<text x="684.5" y="446.5" font-size="12.5" fill="#c8c8c8" font-weight="bold" text-anchor="middle" textLength="34.6" lengthAdjust="spacingAndGlyphs">400ns</text>
<text x="348" y="155.6" font-size="12.5" fill="#3cf03c" font-weight="bold" textLength="37.3" lengthAdjust="spacingAndGlyphs">V(out)</text>
<path d="M51.5,368.0 L51.5,307.2 L52.5,316.8 L53.5,330.0 L55.5,345.2 L57.1,348.3 L59.2,336.6 L61.2,325.5 L62.2,303.2 L63.7,290.0 L65.3,272.5 L67.0,247.0 L68.8,222.4 L70.3,205.0 L72.4,191.5 L74.5,183.5 L77.1,180.2 L79.3,182.5 L82.0,191.5 L85.0,202.0 L87.9,212.9 L91.0,223.0 L93.9,229.6 L96.0,231.3 L98.5,231.2 L101.5,227.5 L104.5,223.5 L109.0,217.8 L112.5,215.3 L116.5,214.7 L120.5,215.6 L126.0,217.6 L130.5,219.4 L133.5,220.3 L141.5,220.2 L151.5,219.6 L204.9,219.5 L206.2,279.1 L207.4,257.7 L209.1,245.0 L211.2,239.1 L213.2,245.5 L215.3,262.4 L217.0,282.0 L218.8,305.4 L221.1,334.0 L223.6,362.6 L226.5,388.0 L229.0,401.0 L230.8,405.5 L233.0,402.0 L235.5,393.0 L237.9,381.6 L241.0,369.0 L243.9,360.2 L247.0,356.0 L251.0,354.7 L254.0,356.0 L257.0,359.0 L260.5,363.5 L264.1,367.3 L267.5,370.0 L271.3,370.9 L274.5,370.0 L278.4,368.5 L282.5,367.0 L286.8,366.1 L295.1,366.4 L311.5,366.8 L368.0,367.3 L368.0,307.2 L369.0,316.8 L370.0,330.0 L372.0,345.2 L373.6,348.3 L375.7,336.6 L377.7,325.5 L378.7,303.2 L380.2,290.0 L381.8,272.5 L383.5,247.0 L385.3,222.4 L386.8,205.0 L388.9,191.5 L391.0,183.5 L393.6,180.2 L395.8,182.5 L398.5,191.5 L401.5,202.0 L404.4,212.9 L407.5,223.0 L410.4,229.6 L412.5,231.3 L415.0,231.2 L418.0,227.5 L421.0,223.5 L425.5,217.8 L429.0,215.3 L433.0,214.7 L437.0,215.6 L442.5,217.6 L447.0,219.4 L450.0,220.3 L458.0,220.2 L468.0,219.6 L521.4,219.5 L522.7,279.1 L523.9,257.7 L525.6,245.0 L527.7,239.1 L529.7,245.5 L531.8,262.4 L533.5,282.0 L535.3,305.4 L537.6,334.0 L540.1,362.6 L543.0,388.0 L545.5,401.0 L547.3,405.5 L549.5,402.0 L552.0,393.0 L554.4,381.6 L557.5,369.0 L560.4,360.2 L563.5,356.0 L567.5,354.7 L570.5,356.0 L573.5,359.0 L577.0,363.5 L580.6,367.3 L584.0,370.0 L587.8,370.9 L591.0,370.0 L594.9,368.5 L599.0,367.0 L603.3,366.1 L611.6,366.4 L628.0,366.8 L684.5,367.3 L684.5,367.3" stroke="#50d050" fill="none" stroke-width="1.15" stroke-linejoin="round"/>
<text x="69.2" y="519.2" font-size="12.5" fill="#000" font-weight="bold" textLength="119.3" lengthAdjust="spacingAndGlyphs">.tran 0 0.4u 0 0.1n</text>
<text x="69.2" y="537.7" font-size="12.5" fill="#000" font-weight="bold" textLength="146.6" lengthAdjust="spacingAndGlyphs">.options plotwinsize=0</text>
<path d="M296.4,523.3 L273.3,523.3 L273.3,542.7" stroke="#1a1ac0" fill="none" stroke-width="1.25" stroke-linecap="square"/>
<path d="M334.8,523.3 L391.2,523.3" stroke="#1a1ac0" fill="none" stroke-width="1.25" stroke-linecap="square"/>
<path d="M429.6,523.3 L500.2,523.3 L500.2,599.4" stroke="#1a1ac0" fill="none" stroke-width="1.25" stroke-linecap="square"/>
<path d="M367.5,523.3 L367.5,589.6 L396.4,589.6" stroke="#1a1ac0" fill="none" stroke-width="1.25" stroke-linecap="square"/>
<path d="M249.2,608.6 L197.4,608.6 L197.4,632.4" stroke="#1a1ac0" fill="none" stroke-width="1.25" stroke-linecap="square"/>
<path d="M287.8,608.4 L396.4,608.4" stroke="#1a1ac0" fill="none" stroke-width="1.25" stroke-linecap="square"/>
<path d="M433.3,599.4 L613,599.4" stroke="#1a1ac0" fill="none" stroke-width="1.25" stroke-linecap="square"/>
<path d="M500.3,599.4 L500.3,623.2" stroke="#1a1ac0" fill="none" stroke-width="1.25" stroke-linecap="square"/>
<path d="M500.3,660.5 L500.3,684.4" stroke="#1a1ac0" fill="none" stroke-width="1.25" stroke-linecap="square"/>
<path d="M566.3,599.4 L566.3,644.7" stroke="#1a1ac0" fill="none" stroke-width="1.25" stroke-linecap="square"/>
<path d="M566.3,649.4 L566.3,684.4" stroke="#1a1ac0" fill="none" stroke-width="1.25" stroke-linecap="square"/>
<path d="M197.4,668.8 L197.4,684.1" stroke="#1a1ac0" fill="none" stroke-width="1.25" stroke-linecap="square"/>
<path d="M424.6,722.2 L424.6,736.5" stroke="#1a1ac0" fill="none" stroke-width="1.25" stroke-linecap="square"/>
<path d="M424.6,773 L424.6,788.4" stroke="#1a1ac0" fill="none" stroke-width="1.25" stroke-linecap="square"/>
<path d="M500.6,720.8 L500.6,736.5" stroke="#1a1ac0" fill="none" stroke-width="1.25" stroke-linecap="square"/>
<path d="M500.6,773 L500.6,788.4" stroke="#1a1ac0" fill="none" stroke-width="1.25" stroke-linecap="square"/>
<path d="M414.5,570.6 L414.5,589.8" stroke="#1a1ac0" fill="none" stroke-width="1.25" stroke-linecap="square"/>
<path d="M414.5,609 L414.5,628" stroke="#1a1ac0" fill="none" stroke-width="1.25" stroke-linecap="square"/>
<rect x="296.4" y="517.2" width="38.40" height="13.30" fill="none" stroke="#1a1aa8" stroke-width="1.1"/>
<rect x="391.2" y="517.2" width="38.40" height="13.30" fill="none" stroke="#1a1aa8" stroke-width="1.1"/>
<rect x="249.2" y="602.2" width="38.60" height="13.30" fill="none" stroke="#1a1aa8" stroke-width="1.1"/>
<rect x="493.2" y="623.2" width="13.60" height="37.30" fill="none" stroke="#1a1aa8" stroke-width="1.1"/>
<path d="M556.25,644.7 L576.3499999999999,644.7 M556.25,649.4 L576.3499999999999,649.4" stroke="#1a1aa8" fill="none" stroke-width="1.2"/>
<path d="M262.55,542.7 L284.05,542.7 L273.3,553.7 Z" stroke="#1a1aa8" fill="none" stroke-width="1.1"/>
<path d="M186.65,684.1 L208.15,684.1 L197.4,695.1 Z" stroke="#1a1aa8" fill="none" stroke-width="1.1"/>
<path d="M489.55,684.4 L511.05,684.4 L500.3,695.4 Z" stroke="#1a1aa8" fill="none" stroke-width="1.1"/>
<path d="M555.55,684.4 L577.05,684.4 L566.3,695.4 Z" stroke="#1a1aa8" fill="none" stroke-width="1.1"/>
<path d="M413.85,788.4 L435.35,788.4 L424.6,799.4 Z" stroke="#1a1aa8" fill="none" stroke-width="1.1"/>
<path d="M489.85,788.4 L511.35,788.4 L500.6,799.4 Z" stroke="#1a1aa8" fill="none" stroke-width="1.1"/>
<path d="M396.4,580.9 L433.3,599.4 L396.4,617.9 Z" stroke="#1a1aa8" fill="none" stroke-width="1.1"/>
<circle cx="197.3" cy="650.6" r="18.2" fill="none" stroke="#1a1aa8" stroke-width="1.05"/>
<path d="M192.204,639.316 L202.39600000000002,639.316 M197.3,634.22 L197.3,644.412 M192.204,662.6120000000001 L202.39600000000002,662.6120000000001" stroke="#1a1aa8" fill="none" stroke-width="1.05"/>
<circle cx="424.4" cy="754.8" r="18.3" fill="none" stroke="#1a1aa8" stroke-width="1.05"/>
<path d="M419.27599999999995,743.454 L429.524,743.454 M424.4,738.3299999999999 L424.4,748.578 M419.27599999999995,766.8779999999999 L429.524,766.8779999999999" stroke="#1a1aa8" fill="none" stroke-width="1.05"/>
<circle cx="500.6" cy="754.8" r="18.3" fill="none" stroke="#1a1aa8" stroke-width="1.05"/>
<path d="M495.476,743.454 L505.72400000000005,743.454 M500.6,738.3299999999999 L500.6,748.578 M495.476,766.8779999999999 L505.72400000000005,766.8779999999999" stroke="#1a1aa8" fill="none" stroke-width="1.05"/>
<rect x="364.75" y="520.55" width="5.5" height="5.5" fill="#0000f0"/>
<rect x="497.45" y="596.65" width="5.5" height="5.5" fill="#0000f0"/>
<rect x="563.55" y="596.65" width="5.5" height="5.5" fill="#0000f0"/>
<path d="M417.4,587.6 L422.6,587.6 M420,585.0 L420,590.2" stroke="#000" fill="none" stroke-width="1.0"/>
<path d="M417.7,611.4 L422.90000000000003,611.4" stroke="#000" fill="none" stroke-width="1.1"/>
<path d="M399.0,589.6 L404.0,589.6" stroke="#000" fill="none" stroke-width="1.1"/>
<path d="M398.9,608.4 L404.1,608.4 M401.5,605.8 L401.5,611.0" stroke="#000" fill="none" stroke-width="1.0"/>
<path d="M410.4,552.2 L418.6,555.9000000000001 L410.4,559.6" stroke="#000" fill="none" stroke-width="2.1" stroke-linejoin="miter"/>
<path d="M411.7,565.3 L418.3,565.3 M415,562.0 L415,568.5999999999999" stroke="#000" fill="none" stroke-width="1.7"/>
<path d="M410.4,628.6 L418.6,632.4000000000001 L410.4,636.2" stroke="#000" fill="none" stroke-width="2.1" stroke-linejoin="miter"/>
<path d="M414.1,640.5 L415.9,640.5" stroke="#000" fill="none" stroke-width="3.6"/>
<path d="M420.4,704 L428.6,707.5 L420.4,711" stroke="#000" fill="none" stroke-width="2.1" stroke-linejoin="miter"/>
<path d="M421.5,716.6 L428.1,716.6 M424.8,713.3000000000001 L424.8,719.9" stroke="#000" fill="none" stroke-width="1.7"/>
<path d="M496.4,709 L504.6,712.5 L496.4,716" stroke="#000" fill="none" stroke-width="2.1" stroke-linejoin="miter"/>
<path d="M500.6,718 L500.6,722" stroke="#000" fill="none" stroke-width="2"/>
<text x="314.9" y="513.8" font-size="12.5" fill="#000" font-weight="bold" text-anchor="middle" textLength="16.6" lengthAdjust="spacingAndGlyphs">R2</text>
<text x="315.4" y="543" font-size="12.5" fill="#000" font-weight="bold" text-anchor="middle" textLength="15.5" lengthAdjust="spacingAndGlyphs">1G</text>
<text x="409.4" y="513.8" font-size="12.5" fill="#000" font-weight="bold" text-anchor="middle" textLength="16" lengthAdjust="spacingAndGlyphs">R1</text>
<text x="410.1" y="543" font-size="12.5" fill="#000" font-weight="bold" text-anchor="middle" textLength="6.5" lengthAdjust="spacingAndGlyphs">1</text>
<text x="191.2" y="604.8" font-size="12.5" fill="#000" font-weight="bold" textLength="10.1" lengthAdjust="spacingAndGlyphs">in</text>
<text x="267.6" y="599" font-size="12.5" fill="#000" font-weight="bold" text-anchor="middle" textLength="16" lengthAdjust="spacingAndGlyphs">R3</text>
<text x="268.2" y="627.6" font-size="12.5" fill="#000" font-weight="bold" text-anchor="middle" textLength="15.5" lengthAdjust="spacingAndGlyphs">50</text>
<text x="211.3" y="631.8" font-size="12.5" fill="#000" font-weight="bold" textLength="16.4" lengthAdjust="spacingAndGlyphs">V3</text>
<text x="424.3" y="584.8" font-size="12.5" fill="#000" font-weight="bold" textLength="16.2" lengthAdjust="spacingAndGlyphs">X1</text>
<text x="424.5" y="622.5" font-size="12.5" fill="#000" font-weight="bold" textLength="44.3" lengthAdjust="spacingAndGlyphs">mic920</text>
<text x="509.3" y="636.5" font-size="12.5" fill="#000" font-weight="bold" textLength="16.8" lengthAdjust="spacingAndGlyphs">R5</text>
<text x="509.8" y="657.7" font-size="12.5" fill="#000" font-weight="bold" textLength="14.3" lengthAdjust="spacingAndGlyphs">1k</text>
<text x="570.9" y="636.5" font-size="12.5" fill="#000" font-weight="bold" textLength="15.7" lengthAdjust="spacingAndGlyphs">C1</text>
<text x="571.6" y="664.4" font-size="12.5" fill="#000" font-weight="bold" textLength="15.4" lengthAdjust="spacingAndGlyphs">1p</text>
<text x="613.7" y="603.6" font-size="12.5" fill="#000" font-weight="bold" textLength="20.8" lengthAdjust="spacingAndGlyphs">out</text>
<text x="211.5" y="679.9" font-size="12.5" fill="#000" font-weight="bold" textLength="211.3" lengthAdjust="spacingAndGlyphs">PULSE(-2 2 0 0.3n 0.3n 97n 0.2u)</text>
<text x="173.7" y="721.9" font-size="12.5" fill="#1212a8" font-weight="bold" textLength="190.6" lengthAdjust="spacingAndGlyphs">PULSE(-2 2 0 0.1n 0.1n 1u 2u)</text>
<text x="173.7" y="740.4" font-size="12.5" fill="#1212a8" font-weight="bold" textLength="107.2" lengthAdjust="spacingAndGlyphs">SINE(0 0.1 10e6)</text>
<text x="437.9" y="735.5" font-size="12.5" fill="#000" font-weight="bold" textLength="16.5" lengthAdjust="spacingAndGlyphs">V1</text>
<text x="438.4" y="783.7" font-size="12.5" fill="#000" font-weight="bold" textLength="7.7" lengthAdjust="spacingAndGlyphs">5</text>
<text x="513.8" y="735.5" font-size="12.5" fill="#000" font-weight="bold" textLength="17.1" lengthAdjust="spacingAndGlyphs">V2</text>
<text x="514.5" y="783.7" font-size="12.5" fill="#000" font-weight="bold" textLength="13.5" lengthAdjust="spacingAndGlyphs">-5</text>
<text x="837.6" y="597.5" font-size="10.2" fill="#000" font-weight="bold" textLength="78.4" lengthAdjust="spacingAndGlyphs">.param Voffs=0</text>
<path d="M808,640.3 L1041.9,640.3" stroke="#1a1ac0" fill="none" stroke-width="1.25" stroke-linecap="square"/>
<path d="M808,669.5 L961.5,669.5" stroke="#1a1ac0" fill="none" stroke-width="1.25" stroke-linecap="square"/>
<path d="M988.6,669.4 L1014.4,669.4" stroke="#1a1ac0" fill="none" stroke-width="1.25" stroke-linecap="square"/>
<path d="M1041.9,654.5 L1014.4,654.5 L1014.4,729.4" stroke="#1a1ac0" fill="none" stroke-width="1.25" stroke-linecap="square"/>
<path d="M858.4,640.3 L858.4,695.1" stroke="#1a1ac0" fill="none" stroke-width="1.25" stroke-linecap="square"/>
<path d="M858.4,699.3 L858.4,726" stroke="#1a1ac0" fill="none" stroke-width="1.25" stroke-linecap="square"/>
<path d="M894.3,640.3 L894.3,653.4" stroke="#1a1ac0" fill="none" stroke-width="1.25" stroke-linecap="square"/>
<path d="M894.3,656.4 L894.3,695.1" stroke="#1a1ac0" fill="none" stroke-width="1.25" stroke-linecap="square"/>
<path d="M894.3,699.3 L894.3,726" stroke="#1a1ac0" fill="none" stroke-width="1.25" stroke-linecap="square"/>
<path d="M929.4,640.3 L929.4,729.6" stroke="#1a1ac0" fill="none" stroke-width="1.25" stroke-linecap="square"/>
<path d="M929.4,756 L929.4,770.7" stroke="#1a1ac0" fill="none" stroke-width="1.25" stroke-linecap="square"/>
<path d="M808.4,718.4 L808.4,729.6" stroke="#1a1ac0" fill="none" stroke-width="1.25" stroke-linecap="square"/>
<path d="M808.4,756 L808.4,770.7" stroke="#1a1ac0" fill="none" stroke-width="1.25" stroke-linecap="square"/>
<path d="M1014.3,756.2 L1014.3,770.2" stroke="#1a1ac0" fill="none" stroke-width="1.25" stroke-linecap="square"/>
<path d="M1050.4,625.7 L1050.4,640.2" stroke="#1a1ac0" fill="none" stroke-width="1.25" stroke-linecap="square"/>
<path d="M1050.4,654 L1050.4,670" stroke="#1a1ac0" fill="none" stroke-width="1.25" stroke-linecap="square"/>
<path d="M1064.2,647.1 L1103.4,647.1" stroke="#1a1ac0" fill="none" stroke-width="1.25" stroke-linecap="square"/>
<path d="M1132.7,647.1 L1171.2,647.1" stroke="#1a1ac0" fill="none" stroke-width="1.25" stroke-linecap="square"/>
<path d="M1078.4,647.1 L1078.4,674.6" stroke="#1a1ac0" fill="none" stroke-width="1.25" stroke-linecap="square"/>
<path d="M1078.4,677.4 L1078.4,698" stroke="#1a1ac0" fill="none" stroke-width="1.25" stroke-linecap="square"/>
<path d="M1149.5,647.1 L1149.5,674.6" stroke="#1a1ac0" fill="none" stroke-width="1.25" stroke-linecap="square"/>
<path d="M1149.5,677.5 L1149.5,698" stroke="#1a1ac0" fill="none" stroke-width="1.25" stroke-linecap="square"/>
<path d="M784.2,634.2 L803,634.2 L808,640.3 L803,646.7 L784.2,646.7 Z" stroke="#1a1aa8" fill="none" stroke-width="1.1"/>
<path d="M780.3,663 L803,663 L808,669.4 L803,675.6 L780.3,675.6 Z" stroke="#1a1aa8" fill="none" stroke-width="1.1"/>
<path d="M1171.2,641.1 L1196.8,641.1 L1202.6,647.1 L1196.8,653.6 L1171.2,653.6 Z" stroke="#1a1aa8" fill="none" stroke-width="1.1"/>
<path d="M1044.1,602.5 L1056.7,602.5 L1056.7,620.8 L1050.4,625.7 L1044.1,620.8 Z" stroke="#1a1aa8" fill="none" stroke-width="1.1"/>
<path d="M1050.4,670 L1056.7,675 L1056.7,689.6 L1044.1,689.6 L1044.1,675 Z" stroke="#1a1aa8" fill="none" stroke-width="1.1"/>
<path d="M886.55,653.4 L902.05,653.4 M886.55,656.4 L902.05,656.4" stroke="#1a1aa8" fill="none" stroke-width="1.1"/>
<path d="M851.05,695.1 L865.75,695.1 M851.05,699.3 L865.75,699.3" stroke="#1a1aa8" fill="none" stroke-width="1.1"/>
<path d="M886.9499999999999,695.1 L901.65,695.1 M886.9499999999999,699.3 L901.65,699.3" stroke="#1a1aa8" fill="none" stroke-width="1.1"/>
<path d="M1071.0,674.6 L1085.8000000000002,674.6 M1071.0,677.4 L1085.8000000000002,677.4" stroke="#1a1aa8" fill="none" stroke-width="1.1"/>
<path d="M1142.0,674.6 L1157.0,674.6 M1142.0,677.5 L1157.0,677.5" stroke="#1a1aa8" fill="none" stroke-width="1.1"/>
<rect x="1103.4" y="642.4" width="29.30" height="10.10" fill="none" stroke="#1a1aa8" stroke-width="1.1"/>
<path d="M1036.3,633.3 L1064.2,647 L1036.3,661.4 Z" stroke="#1a1aa8" fill="none" stroke-width="1.05"/>
<circle cx="975" cy="668.3" r="13.6" fill="none" stroke="#1a1aa8" stroke-width="1.05"/>
<path d="M963.5999999999999,669.4 L970.0,669.4 M966.8,666.1999999999999 L966.8,672.6" stroke="#1a1aa8" fill="none" stroke-width="1.0"/>
<path d="M983.6,664 L983.6,674.5" stroke="#1a1aa8" fill="none" stroke-width="1.05"/>
<circle cx="807.9" cy="742.8" r="13.2" fill="none" stroke="#1a1aa8" stroke-width="1.05"/>
<path d="M807.9,735.9359999999999 L807.9,750.06 M805.9,745.4399999999999 L809.9,745.4399999999999 L807.9,750.06 Z" stroke="#1a1aa8" fill="none" stroke-width="1.05"/>
<circle cx="929.4" cy="742.8" r="13.2" fill="none" stroke="#1a1aa8" stroke-width="1.05"/>
<path d="M929.4,735.9359999999999 L929.4,750.06 M927.4,745.4399999999999 L931.4,745.4399999999999 L929.4,750.06 Z" stroke="#1a1aa8" fill="none" stroke-width="1.05"/>
<circle cx="1014.3" cy="742.8" r="13.2" fill="none" stroke="#1a1aa8" stroke-width="1.05"/>
<path d="M1014.3,735.9359999999999 L1014.3,750.06 M1012.3,745.4399999999999 L1016.3,745.4399999999999 L1014.3,750.06 Z" stroke="#1a1aa8" fill="none" stroke-width="1.05"/>
<rect x="855.8" y="637.7" width="5.2" height="5.2" fill="#0000f0"/>
<rect x="891.7" y="637.7" width="5.2" height="5.2" fill="#0000f0"/>
<rect x="926.8" y="637.7" width="5.2" height="5.2" fill="#0000f0"/>
<rect x="891.7" y="666.9" width="5.2" height="5.2" fill="#0000f0"/>
<rect x="1011.8" y="666.7" width="5.2" height="5.2" fill="#0000f0"/>
<rect x="1075.8" y="644.5" width="5.2" height="5.2" fill="#0000f0"/>
<rect x="1146.9" y="644.5" width="5.2" height="5.2" fill="#0000f0"/>
<path d="M1051.7,638.9 L1055.8999999999999,638.9 M1053.8,636.8 L1053.8,641.0" stroke="#000" fill="none" stroke-width="0.9"/>
<path d="M1052,656.5 L1056,656.5" stroke="#000" fill="none" stroke-width="1.0"/>
<path d="M1037.1,654.5 L1041.5,654.5 M1039.3,652.3 L1039.3,656.7" stroke="#000" fill="none" stroke-width="0.9"/>
<path d="M1047.4,609.3 L1053.4,609.3 M1050.4,606.3 L1050.4,612.3" stroke="#000" fill="none" stroke-width="1.6"/>
<path d="M1046.8,614.5 L1053.6,617.0 L1046.8,619.5" stroke="#000" fill="none" stroke-width="1.8" stroke-linejoin="miter"/>
<path d="M1050.4,675.5 L1050.4,678.3" stroke="#000" fill="none" stroke-width="1.8"/>
<path d="M1046.8,679.3 L1053.6,682.15 L1046.8,685" stroke="#000" fill="none" stroke-width="1.8" stroke-linejoin="miter"/>
<path d="M804.3,712.8 L810.8,715.0 L804.3,717.2" stroke="#000" fill="none" stroke-width="1.9" stroke-linejoin="miter"/>
<rect x="0" y="0" width="0" height="0" fill="none"/>
<path d="M805.3000000000001,707 L810.9,707 M808.1,704.2 L808.1,709.8" stroke="#000" fill="none" stroke-width="1.5"/>
<path d="M808.4,769.9 L808.4,772.4" stroke="#000" fill="none" stroke-width="1.6"/>
<path d="M804.8,773.9 L811.4,776.4 L804.8,778.9" stroke="#000" fill="none" stroke-width="1.9" stroke-linejoin="miter"/>
<path d="M929.4,769.9 L929.4,772.4" stroke="#000" fill="none" stroke-width="1.6"/>
<path d="M925.8,773.9 L932.4,776.4 L925.8,778.9" stroke="#000" fill="none" stroke-width="1.9" stroke-linejoin="miter"/>
<path d="M1013.6,769.3 L1013.6,771.8" stroke="#000" fill="none" stroke-width="1.6"/>
<path d="M1010.0,773.3 L1016.6,775.8 L1010.0,778.3" stroke="#000" fill="none" stroke-width="1.9" stroke-linejoin="miter"/>
<path d="M854.6,726.8 L861.0,729.4 L854.6,732.0" stroke="#000" fill="none" stroke-width="1.9" stroke-linejoin="miter"/>
<path d="M857.9,733.0999999999999 L857.9,735.5999999999999" stroke="#000" fill="none" stroke-width="1.6"/>
<path d="M890.5,726.8 L896.9,729.4 L890.5,732.0" stroke="#000" fill="none" stroke-width="1.9" stroke-linejoin="miter"/>
<path d="M893.8,733.0999999999999 L893.8,735.5999999999999" stroke="#000" fill="none" stroke-width="1.6"/>
<path d="M1074.6000000000001,698.3 L1081.0,700.9 L1074.6000000000001,703.5" stroke="#000" fill="none" stroke-width="1.9" stroke-linejoin="miter"/>
<path d="M1077.9,704.5999999999999 L1077.9,707.0999999999999" stroke="#000" fill="none" stroke-width="1.6"/>
<path d="M1145.7,698.3 L1152.1,700.9 L1145.7,703.5" stroke="#000" fill="none" stroke-width="1.9" stroke-linejoin="miter"/>
<path d="M1149.0,704.5999999999999 L1149.0,707.0999999999999" stroke="#000" fill="none" stroke-width="1.6"/>
<text x="787.5" y="644.2" font-size="10.2" fill="#000" font-weight="bold" textLength="14.2" lengthAdjust="spacingAndGlyphs">-In</text>
<text x="784.2" y="672.9" font-size="10.2" fill="#000" font-weight="bold" textLength="17.5" lengthAdjust="spacingAndGlyphs">+In</text>
<text x="897.1" y="647.6" font-size="10.2" fill="#000" font-weight="bold" textLength="13.4" lengthAdjust="spacingAndGlyphs">C3</text>
<text x="898.4" y="668.4" font-size="10.2" fill="#000" font-weight="bold" textLength="10" lengthAdjust="spacingAndGlyphs">1f</text>
<text x="862.6" y="690.1" font-size="10.2" fill="#000" font-weight="bold" textLength="12.5" lengthAdjust="spacingAndGlyphs">C1</text>
<text x="862.6" y="711.8" font-size="10.2" fill="#000" font-weight="bold" textLength="10.7" lengthAdjust="spacingAndGlyphs">1f</text>
<text x="897.1" y="690.1" font-size="10.2" fill="#000" font-weight="bold" textLength="13.5" lengthAdjust="spacingAndGlyphs">C2</text>
<text x="897.6" y="711.8" font-size="10.2" fill="#000" font-weight="bold" textLength="10.7" lengthAdjust="spacingAndGlyphs">1f</text>
<text x="962.2" y="651.6" font-size="10.2" fill="#000" font-weight="bold" textLength="26" lengthAdjust="spacingAndGlyphs">Voffs</text>
<text x="955.7" y="692.3" font-size="10.2" fill="#000" font-weight="bold" textLength="39" lengthAdjust="spacingAndGlyphs">{Voffs}</text>
<text x="1057.6" y="636.8" font-size="10.2" fill="#000" font-weight="bold" textLength="12.2" lengthAdjust="spacingAndGlyphs">U1</text>
<text x="1082.6" y="668.7" font-size="10.2" fill="#000" font-weight="bold" textLength="13.1" lengthAdjust="spacingAndGlyphs">C5</text>
<text x="1082.6" y="689.6" font-size="10.2" fill="#000" font-weight="bold" textLength="10.7" lengthAdjust="spacingAndGlyphs">1f</text>
<text x="1117.2" y="639.6" font-size="10.2" fill="#000" font-weight="bold" text-anchor="middle" textLength="13" lengthAdjust="spacingAndGlyphs">R4</text>
<text x="1117.2" y="661.5" font-size="10.2" fill="#000" font-weight="bold" text-anchor="middle" textLength="13" lengthAdjust="spacingAndGlyphs">35</text>
<text x="1153.4" y="668.8" font-size="10.2" fill="#000" font-weight="bold" textLength="13.1" lengthAdjust="spacingAndGlyphs">C4</text>
<text x="1153.6" y="689.5" font-size="10.2" fill="#000" font-weight="bold" textLength="10.4" lengthAdjust="spacingAndGlyphs">1f</text>
<text x="1172.5" y="650.5" font-size="10.2" fill="#000" font-weight="bold" textLength="20.9" lengthAdjust="spacingAndGlyphs">OUT</text>
<text x="819.3" y="728.5" font-size="10.2" fill="#000" font-weight="bold" textLength="11.1" lengthAdjust="spacingAndGlyphs">I3</text>
<text x="819.7" y="764.7" font-size="10.2" fill="#000" font-weight="bold" textLength="32.2" lengthAdjust="spacingAndGlyphs">0.55m</text>
<text x="940.4" y="728.5" font-size="10.2" fill="#000" font-weight="bold" textLength="10.5" lengthAdjust="spacingAndGlyphs">I1</text>
<text x="940.4" y="764.5" font-size="10.2" fill="#000" font-weight="bold" textLength="29.5" lengthAdjust="spacingAndGlyphs">0.25μ</text>
<text x="1025.3" y="728.6" font-size="10.2" fill="#000" font-weight="bold" textLength="11.3" lengthAdjust="spacingAndGlyphs">I2</text>
<text x="1025.3" y="764.3" font-size="10.2" fill="#000" font-weight="bold" textLength="29.5" lengthAdjust="spacingAndGlyphs">0.25μ</text>
<text x="1064.3" y="728.6" font-size="10.2" fill="#000" font-weight="bold" textLength="205.6" lengthAdjust="spacingAndGlyphs">Avol=10k GBW=67Meg Slew=1350Meg</text>
<clipPath id="cl2"><rect x="721" y="700" width="691" height="100"/></clipPath>
<g clip-path="url(#cl2)">
<text x="1065" y="739.3" font-size="10.2" fill="#000" font-weight="bold" textLength="181.9" lengthAdjust="spacingAndGlyphs">en=11n enk=300 in=0.7p ink=300</text>
<text x="1250.7" y="739.3" font-size="10.2" fill="#000" font-weight="bold" textLength="147.6" lengthAdjust="spacingAndGlyphs">Rin=500Meg Ro=1k Ccm=1p</text>
<text x="1402.4" y="739.3" font-size="10.2" fill="#000" font-weight="bold" textLength="50" lengthAdjust="spacingAndGlyphs">Cdiff=2p</text>
</g>
<text x="1064.3" y="751.1" font-size="10.2" fill="#000" font-weight="bold" textLength="210.9" lengthAdjust="spacingAndGlyphs">ilimit=70m rail=1.4 Vos=0 phimargin=32</text>
<text x="1064.3" y="763.1" font-size="10.2" fill="#000" font-weight="bold" textLength="36.4" lengthAdjust="spacingAndGlyphs">level3b</text>
<defs><filter id="dsh" x="-5%" y="-5%" width="115%" height="120%"><feGaussianBlur stdDeviation="4"/></filter></defs>
<rect x="793.3" y="151.8" width="578.0" height="398.99999999999994" fill="#000" opacity="0.32" filter="url(#dsh)"/>
<rect x="791.3" y="148.8" width="574.0" height="394.99999999999994" fill="#f0f0f0" stroke="#9a9a9a" stroke-width="0.8"/>
<rect x="791.8" y="149.3" width="573.0" height="30" fill="#ffffff"/>
<g transform="translate(791.8,152.1)">
<path d="M8.6,3.1 L8.6,18.6 L20.4,10.6 M8.6,3.1 L11.7,5.4" stroke="#000" fill="none" stroke-width="1.3"/>
<path d="M13.6,3.4 L15.6,3.4 L12.8,9.2 L16.8,9.2 L16.2,10.8 L10.2,10.8 Z" stroke="none" fill="#8a0a14" stroke-width="1"/>
<path d="M16.3,3.8 L23.8,3.2 L22.8,5.5 L21.6,5.5 L19.6,11.2 L17.9,11.2 L19.9,5.5 L16.3,5.5 Z" stroke="none" fill="#8a0a14" stroke-width="1"/>
</g>
<text x="821.8" y="168" font-size="12" fill="#9b9b9b" textLength="147.1" lengthAdjust="spacingAndGlyphs">Component Attribute Editor</text>
<path d="M1345.5,158.5 L1355,168 M1355,158.5 L1345.5,168" stroke="#707070" fill="none" stroke-width="1"/>
<rect x="802.7" y="191.6" width="90" height="16.9" fill="#e1e1e1" stroke="#adadad" stroke-width="1"/>
<text x="890" y="203.7" font-size="11.6" fill="#000" text-anchor="end" textLength="65" lengthAdjust="spacingAndGlyphs">Open Symbol:</text>
<text x="901.7" y="203.7" font-size="11.6" fill="#000" textLength="423.3" lengthAdjust="spacingAndGlyphs">C:\Users\Klaus Rawski\Documents\LTspiceXVII\lib\sym\Opamps\UniversalOpamp2.asy</text>
<text x="959" y="254.6" font-size="11.6" fill="#000" textLength="239.3" lengthAdjust="spacingAndGlyphs">This is the first attribute to appear on the netlist line.</text>
<rect x="801.9" y="288.8" width="553" height="188.6" fill="#ffffff" stroke="#8f8f8f" stroke-width="1"/>
<rect x="940" y="290" width="1" height="23" fill="#e5e5e5"/>
<rect x="1308.5" y="290" width="1" height="23" fill="#e5e5e5"/>
<rect x="1353" y="290" width="1" height="23" fill="#e5e5e5"/>
<text x="809.6" y="305.5" font-size="11.6" fill="#000" textLength="37.6" lengthAdjust="spacingAndGlyphs">Attribute</text>
<text x="946.2" y="305.5" font-size="11.6" fill="#000" textLength="26.2" lengthAdjust="spacingAndGlyphs">Value</text>
<text x="1323" y="305.5" font-size="11.6" fill="#000" textLength="16" lengthAdjust="spacingAndGlyphs">Vis.</text>
<rect x="803" y="332.0" width="551" height="1" fill="#f0f0f0"/>
<rect x="940" y="313.5" width="1" height="19.0" fill="#f0f0f0"/>
<rect x="1308.5" y="313.5" width="1" height="19.0" fill="#f0f0f0"/>
<text x="807.5" y="327.9" font-size="11.6" fill="#000" textLength="25" lengthAdjust="spacingAndGlyphs">Prefix</text>
<text x="943.8" y="327.9" font-size="11.6" fill="#000" textLength="7.2" lengthAdjust="spacingAndGlyphs">X</text>
<rect x="803" y="351.0" width="551" height="1" fill="#f0f0f0"/>
<rect x="940" y="332.5" width="1" height="19.0" fill="#f0f0f0"/>
<rect x="1308.5" y="332.5" width="1" height="19.0" fill="#f0f0f0"/>
<text x="807.5" y="346.9" font-size="11.6" fill="#000" textLength="43.4" lengthAdjust="spacingAndGlyphs">InstName</text>
<text x="943.8" y="346.9" font-size="11.6" fill="#000" textLength="12.5" lengthAdjust="spacingAndGlyphs">U1</text>
<text x="1329" y="346.9" font-size="11.6" fill="#000" text-anchor="middle" textLength="7.6" lengthAdjust="spacingAndGlyphs">X</text>
<rect x="803" y="370.0" width="551" height="1" fill="#f0f0f0"/>
<rect x="940" y="351.5" width="1" height="19.0" fill="#f0f0f0"/>
<rect x="1308.5" y="351.5" width="1" height="19.0" fill="#f0f0f0"/>
<rect x="807" y="352.2" width="546.5" height="17.6" fill="#0078d7"/>
<rect x="940" y="352.2" width="1" height="17.6" fill="#ffffff"/>
<rect x="1308.5" y="352.2" width="1" height="17.6" fill="#ffffff"/>
<text x="807.5" y="365.9" font-size="11.6" fill="#ffffff" textLength="55.1" lengthAdjust="spacingAndGlyphs">SpiceModel</text>
<text x="943.8" y="365.9" font-size="11.6" fill="#ffffff" textLength="33" lengthAdjust="spacingAndGlyphs">level3b</text>
<text x="1329" y="365.9" font-size="11.6" fill="#ffffff" text-anchor="middle" textLength="7.6" lengthAdjust="spacingAndGlyphs">X</text>
<rect x="803" y="389.0" width="551" height="1" fill="#f0f0f0"/>
<rect x="940" y="370.5" width="1" height="19.0" fill="#f0f0f0"/>
<rect x="1308.5" y="370.5" width="1" height="19.0" fill="#f0f0f0"/>
<text x="807.5" y="384.9" font-size="11.6" fill="#000" textLength="25.9" lengthAdjust="spacingAndGlyphs">Value</text>
<rect x="803" y="408.0" width="551" height="1" fill="#f0f0f0"/>
<rect x="940" y="389.5" width="1" height="19.0" fill="#f0f0f0"/>
<rect x="1308.5" y="389.5" width="1" height="19.0" fill="#f0f0f0"/>
<text x="807.5" y="403.9" font-size="11.6" fill="#000" textLength="32.5" lengthAdjust="spacingAndGlyphs">Value2</text>
<text x="943.8" y="403.9" font-size="11.6" fill="#000" textLength="189.3" lengthAdjust="spacingAndGlyphs">Avol=10k GBW=67Meg Slew=1350Meg</text>
<text x="1329" y="403.9" font-size="11.6" fill="#000" text-anchor="middle" textLength="7.6" lengthAdjust="spacingAndGlyphs">X</text>
<rect x="803" y="427.0" width="551" height="1" fill="#f0f0f0"/>
<rect x="940" y="408.5" width="1" height="19.0" fill="#f0f0f0"/>
<rect x="1308.5" y="408.5" width="1" height="19.0" fill="#f0f0f0"/>
<text x="807.5" y="422.9" font-size="11.6" fill="#000" textLength="45.9" lengthAdjust="spacingAndGlyphs">SpiceLine</text>
<text x="943.8" y="422.9" font-size="11.6" fill="#000" textLength="181.3" lengthAdjust="spacingAndGlyphs">ilimit=70m rail=1.4 Vos=0 phimargin=32</text>
<text x="1329" y="422.9" font-size="11.6" fill="#000" text-anchor="middle" textLength="7.6" lengthAdjust="spacingAndGlyphs">X</text>
<rect x="803" y="446.0" width="551" height="1" fill="#f0f0f0"/>
<rect x="940" y="427.5" width="1" height="19.0" fill="#f0f0f0"/>
<rect x="1308.5" y="427.5" width="1" height="19.0" fill="#f0f0f0"/>
<text x="807.5" y="441.9" font-size="11.6" fill="#000" textLength="52.5" lengthAdjust="spacingAndGlyphs">SpiceLine2</text>
<text x="943.8" y="441.9" font-size="11.6" fill="#000" textLength="342.1" lengthAdjust="spacingAndGlyphs">en=11n enk=300 in=0.7p ink=300 Rin=500Meg Ro=1k Ccm=1p Cdiff=2p</text>
<text x="1329" y="441.9" font-size="11.6" fill="#000" text-anchor="middle" textLength="7.6" lengthAdjust="spacingAndGlyphs">X</text>
<rect x="803" y="465.0" width="551" height="1" fill="#f0f0f0"/>
<rect x="940" y="446.5" width="1" height="19.0" fill="#f0f0f0"/>
<rect x="1308.5" y="446.5" width="1" height="19.0" fill="#f0f0f0"/>
<rect x="940" y="465.5" width="1" height="19.0" fill="#f0f0f0"/>
<rect x="1308.5" y="465.5" width="1" height="19.0" fill="#f0f0f0"/>
<rect x="899.5" y="513.8" width="72.3" height="20.2" fill="#e1e1e1" stroke="#adadad" stroke-width="1"/>
<text x="935.8" y="527.8" font-size="11.6" fill="#000" text-anchor="middle" textLength="32.6" lengthAdjust="spacingAndGlyphs">Cancel</text>
<rect x="1186.7" y="513.8" width="72.3" height="20.2" fill="#e1e1e1" stroke="#adadad" stroke-width="1"/>
<text x="1223.0" y="527.8" font-size="11.6" fill="#000" text-anchor="middle" textLength="14" lengthAdjust="spacingAndGlyphs">OK</text>
<rect x="1360" y="535" width="1.7" height="1.7" fill="#a0a0a0"/>
<rect x="1357" y="538" width="1.7" height="1.7" fill="#a0a0a0"/>
<rect x="1360" y="538" width="1.7" height="1.7" fill="#a0a0a0"/>
<rect x="1354" y="541" width="1.7" height="1.7" fill="#a0a0a0"/>
<rect x="1357" y="541" width="1.7" height="1.7" fill="#a0a0a0"/>
<rect x="1360" y="541" width="1.7" height="1.7" fill="#a0a0a0"/>
</svg></body></html>
